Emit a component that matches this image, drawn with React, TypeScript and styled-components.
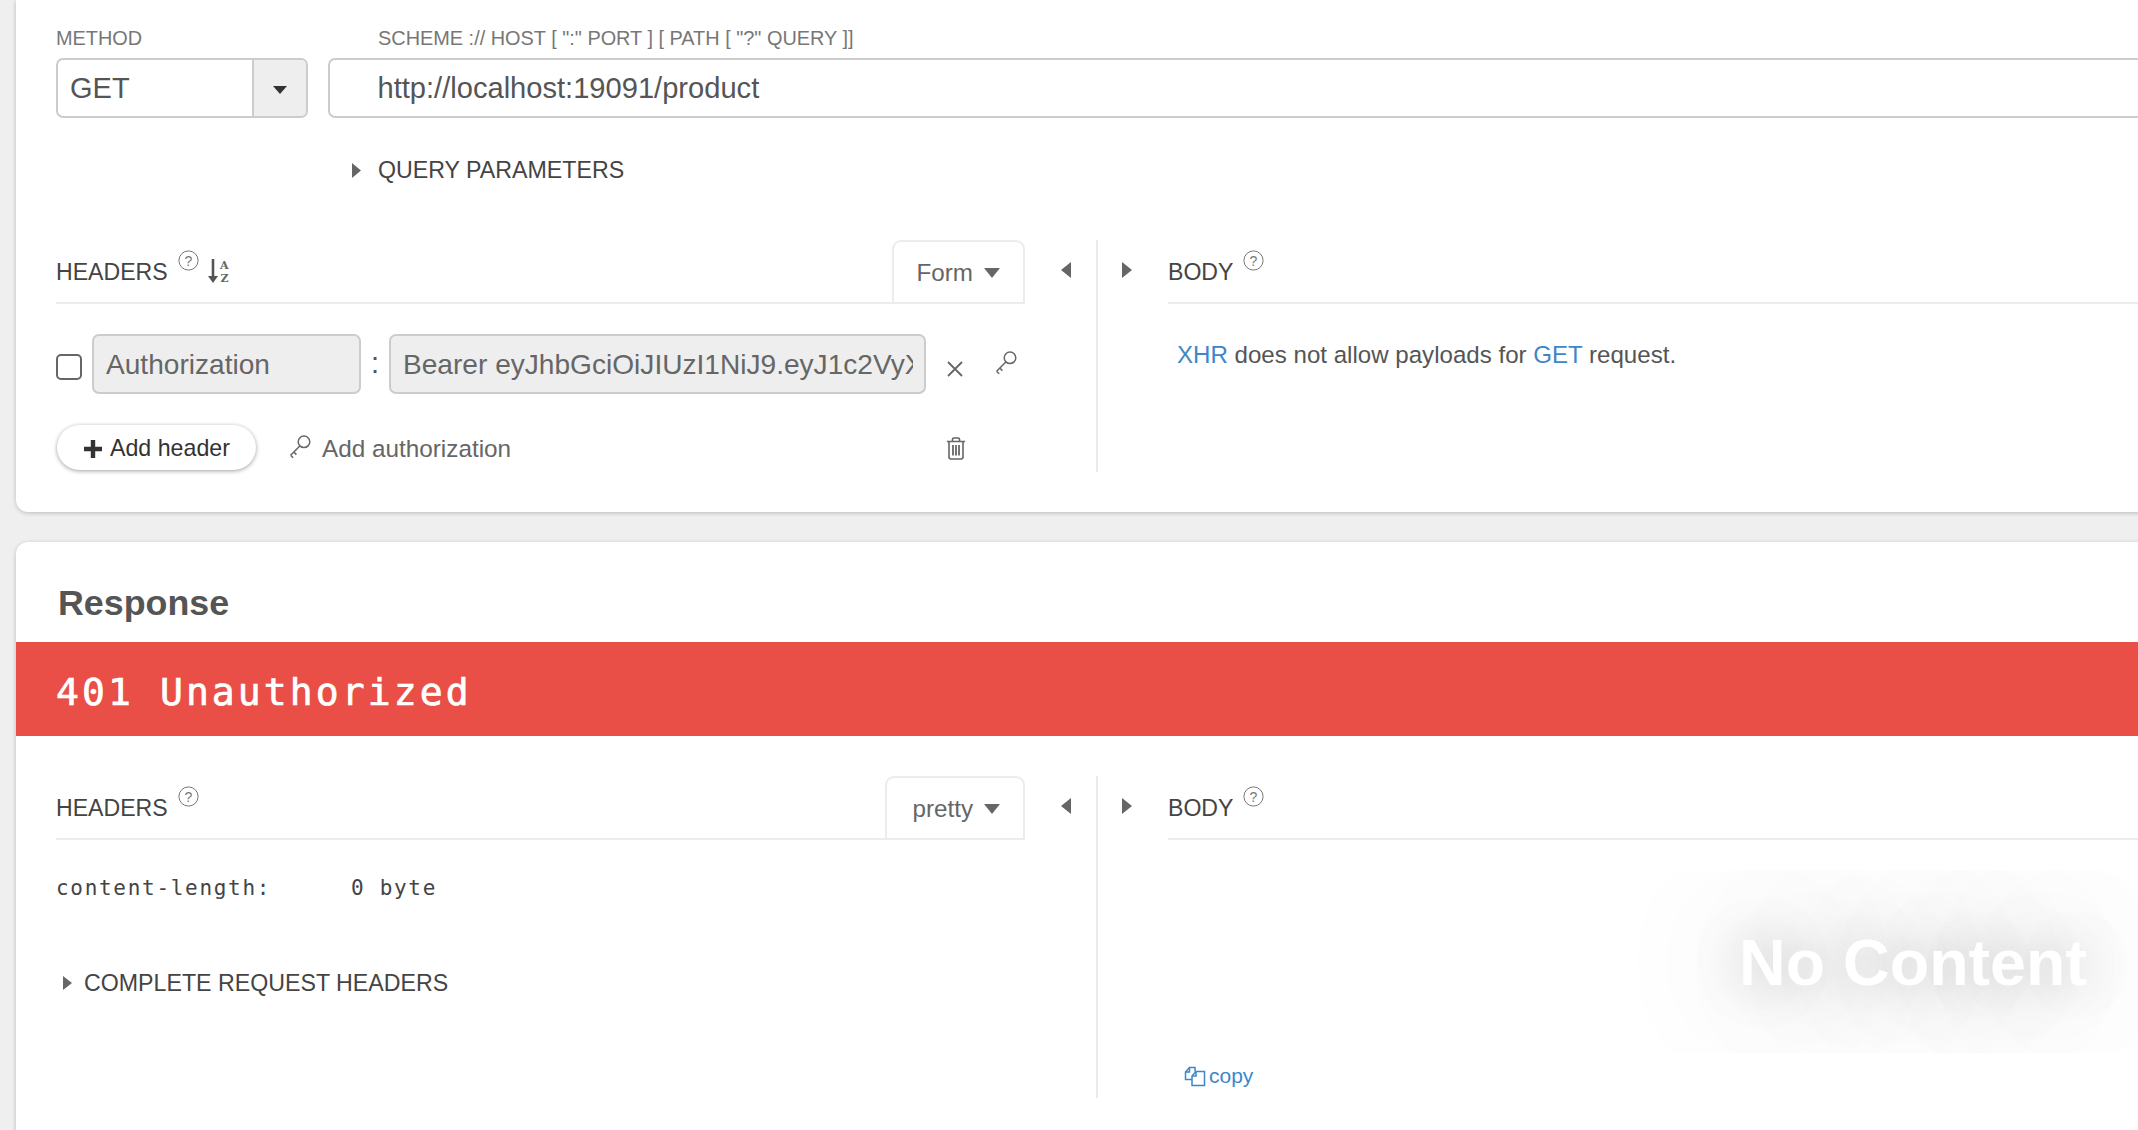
import React from "react";
import styled, { createGlobalStyle } from "styled-components";

const Global = createGlobalStyle`
  html, body { margin: 0; padding: 0; height: 100%; overflow: hidden; background: #efefef; }
  body { font-family: "Liberation Sans", Arial, sans-serif; color: #444; }
  #root { width: 2138px; height: 1130px; overflow: hidden; }
`;

const Page = styled.div`
  width: 2400px;
  padding-left: 16px;
  display: flex;
  flex-direction: column;
  gap: 30px;
`;

const Card = styled.section<{ $top?: boolean }>`
  background: #fff;
  box-shadow: 0 1px 4px rgba(0, 0, 0, 0.22);
  border-radius: ${(p) => (p.$top ? "0 0 12px 12px" : "12px 12px 0 0")};
  height: ${(p) => (p.$top ? "512px" : "640px")};
  display: flex;
  flex-direction: column;
`;

const UrlRow = styled.div`
  display: flex;
  padding: 27px 0 0 40px;
  gap: 20px;
`;

const Field = styled.div<{ $w?: number }>`
  width: ${(p) => (p.$w ? `${p.$w}px` : "auto")};
  flex: ${(p) => (p.$w ? "none" : "1")};
  display: flex;
  flex-direction: column;
  gap: 9px;
`;

const FieldLabel = styled.label<{ $indent?: number }>`
  font-size: 19.9px;
  line-height: 22px;
  color: #777;
  padding-left: ${(p) => p.$indent ?? 0}px;
`;

const Select = styled.div`
  height: 60px;
  box-sizing: border-box;
  border: 2.5px solid #ccc;
  border-radius: 7px;
  display: flex;
  overflow: hidden;
`;

const SelectValue = styled.div`
  flex: 1;
  font-size: 29px;
  line-height: 57px;
  padding-left: 12px;
  color: #555;
`;

const SelectArrow = styled.div`
  width: 54px;
  background: #eee;
  border-left: 2.5px solid #ccc;
  display: flex;
  align-items: center;
  justify-content: center;
  padding-top: 3px;
  box-sizing: border-box;
`;

const UrlInput = styled.div`
  height: 60px;
  box-sizing: border-box;
  border: 2.5px solid #ccc;
  border-radius: 7px;
  font-size: 29.1px;
  line-height: 57px;
  padding-left: 47.5px;
  color: #555;
`;

const Disclosure = styled.div<{ $x: number; $top: number; $gap: number }>`
  display: flex;
  align-items: center;
  padding-left: ${(p) => p.$x}px;
  margin-top: ${(p) => p.$top}px;
  gap: ${(p) => p.$gap}px;
  font-size: 23.2px;
  line-height: 28px;
  color: #444;
`;

const Panes = styled.div<{ $top: number; $h: number }>`
  display: flex;
  margin-top: ${(p) => p.$top}px;
  height: ${(p) => p.$h}px;
`;

const LeftPane = styled.div`
  width: 969px;
  margin-left: 40px;
  flex: none;
  display: flex;
  flex-direction: column;
`;

const Collapse = styled.div`
  width: 71px;
  flex: none;
  height: 63px;
  display: flex;
  align-items: center;
  padding: 0 0 4px 36px;
  box-sizing: border-box;
`;

const Gutter = styled.div`
  flex: none;
  width: 72px;
  display: flex;
  box-sizing: border-box;
`;

const GutterLine = styled.div`
  width: 2px;
  background: #e9e9e9;
  flex: none;
`;

const ExpandBtn = styled.div`
  flex: 1;
  height: 63px;
  display: flex;
  align-items: center;
  padding: 0 0 4px 24px;
  box-sizing: border-box;
`;

const RightPane = styled.div`
  flex: 1;
  display: flex;
  flex-direction: column;
  position: relative;
`;

const PaneHead = styled.div`
  height: 62px;
  border-bottom: 2px solid #ececec;
  box-sizing: content-box;
  display: flex;
  align-items: flex-start;
  position: relative;
`;

const PaneTitle = styled.h3`
  margin: 0;
  font-weight: 400;
  font-size: 23.1px;
  line-height: 28px;
  color: #444;
  padding-top: 18px;
`;

const Help = styled.svg`
  width: 21px;
  height: 21px;
  margin: 10px 0 0 10px;
  flex: none;
`;

const Sort = styled.svg`
  width: 24px;
  height: 27px;
  margin: 18px 0 0 8px;
  flex: none;
`;

const ModeTab = styled.div<{ $w: number }>`
  margin-left: auto;
  width: ${(p) => p.$w}px;
  height: 64px;
  box-sizing: border-box;
  border: 2px solid #ececec;
  border-radius: 9px 9px 0 0;
  display: flex;
  align-items: center;
  justify-content: flex-end;
  gap: 11px;
  padding: 2px 23px 0 0;
  font-size: 24.2px;
  color: #666;
  background: #fff;
`;

const HeaderRow = styled.div`
  display: flex;
  align-items: flex-start;
  margin-top: 30px;
  height: 60px;
`;

const Check = styled.span`
  width: 26px;
  height: 26px;
  box-sizing: border-box;
  border: 2.5px solid #666;
  border-radius: 5px;
  margin-top: 20px;
  flex: none;
`;

const ReadInput = styled.div<{ $w: number; $gap: number }>`
  width: ${(p) => p.$w}px;
  margin-left: ${(p) => p.$gap}px;
  height: 60px;
  box-sizing: border-box;
  background: #eee;
  border: 2.5px solid #ccc;
  border-radius: 7px;
  padding: 0 11px 0 12px;
  flex: none;
`;

const ReadText = styled.div`
  font-size: 28.1px;
  line-height: 57px;
  color: #666;
  white-space: nowrap;
  overflow: hidden;
`;

const Colon = styled.span`
  font-size: 29px;
  line-height: 58px;
  color: #555;
  margin-left: 10px;
  width: 9px;
  flex: none;
`;

const RowIcon = styled.svg<{ $gap: number; $top: number }>`
  flex: none;
  margin-left: ${(p) => p.$gap}px;
  margin-top: ${(p) => p.$top}px;
`;

const ActionRow = styled.div`
  display: flex;
  align-items: center;
  margin-top: 31px;
  height: 45px;
  padding-left: 1px;
`;

const AddButton = styled.div`
  width: 199px;
  height: 45px;
  box-sizing: border-box;
  border-radius: 23px;
  background: #fff;
  box-shadow: 0 1px 4px rgba(0, 0, 0, 0.38);
  display: flex;
  align-items: center;
  padding: 2px 0 0 27px;
  gap: 8px;
  font-size: 23.2px;
  color: #333;
  flex: none;
`;

const AddAuth = styled.div`
  display: flex;
  align-items: center;
  margin-left: 33px;
  padding-top: 2px;
  gap: 11px;
  font-size: 24.3px;
  color: #666;
  flex: none;
  width: 657px;
`;

const AuthKey = styled.svg`
  margin-top: -4px;
  flex: none;
`;

const Trash = styled.svg`
  margin-top: 2px;
  flex: none;
`;

const BodyNote = styled.p`
  margin: 37px 0 0 9px;
  font-size: 24.1px;
  line-height: 28px;
  color: #555;
`;

const Link = styled.span`
  color: #3d87c9;
`;

const Title = styled.h2`
  margin: 0;
  padding: 41px 0 0 42px;
  font-size: 35.8px;
  line-height: 40px;
  height: 59px;
  font-weight: 700;
  color: #555;
`;

const StatusBar = styled.div`
  height: 94px;
  background: #e94f47;
  color: #fff;
  font-family: "DejaVu Sans Mono", monospace;
  font-size: 38px;
  -webkit-text-stroke: 0.7px #fff;
  letter-spacing: 3.1px;
  line-height: 100px;
  padding-left: 40px;
  white-space: pre;
`;

const MonoLine = styled.div`
  font-family: "DejaVu Sans Mono", monospace;
  font-size: 21px;
  letter-spacing: 1.7px;
  color: #444;
  white-space: pre;
  margin-top: 36px;
  line-height: 24px;
  display: flex;
`;

const MonoKey = styled.span`
  width: 295px;
  flex: none;
`;

const ShadowClip = styled.div`
  position: absolute;
  left: 0;
  right: 0;
  top: 94px;
  height: 183px;
  overflow: hidden;
  box-sizing: border-box;
  padding: 56px 0 0 571px;
`;

const NoContent = styled.div`
  font-size: 64.6px;
  line-height: 74px;
  font-weight: 700;
  color: #fff;
  white-space: nowrap;
  text-shadow: 0 0 50px rgba(0, 0, 0, 0.22), 0 0 125px rgba(0, 0, 0, 0.42);
`;

const CopyLink = styled.div`
  position: absolute;
  left: 16px;
  top: 287px;
  display: flex;
  align-items: center;
  gap: 3px;
  font-size: 21px;
  line-height: 26px;
  color: #3d87c9;
`;

const HelpIcon = () => (
  <Help viewBox="0 0 21 21">
    <circle cx="10.5" cy="10.5" r="9.6" fill="none" stroke="#777" strokeWidth="1" />
    <text x="10.5" y="15.5" textAnchor="middle" fontSize="14" fontFamily="Liberation Sans" fill="#777">?</text>
  </Help>
);

const Tri = ({ dir, color = "#666", w, h }: { dir: "l" | "r" | "d"; color?: string; w?: number; h?: number }) => {
  if (dir === "d")
    return (
      <svg width={w ?? 16} height={h ?? 10} viewBox="0 0 16 10" preserveAspectRatio="none">
        <path d="M0 0H16L8 10Z" fill={color} />
      </svg>
    );
  return (
    <svg width={w ?? 10} height={h ?? 16} viewBox="0 0 10 16" preserveAspectRatio="none">
      <path d={dir === "l" ? "M10 0V16L0 8Z" : "M0 0V16L10 8Z"} fill={color} />
    </svg>
  );
};

const KeyPath = () => (
  <g fill="none" stroke="#666" strokeWidth="1.5">
    <circle cx="15" cy="6.8" r="5.8" />
    <path d="M10.8 11L1.6 20.2M1.6 20.2L4.2 22.8M4.8 17L7.4 19.6" />
  </g>
);

const App = () => (
  <>
    <Global />
    <Page>
      <Card $top>
        <UrlRow>
          <Field $w={252}>
            <FieldLabel>METHOD</FieldLabel>
            <Select>
              <SelectValue>GET</SelectValue>
              <SelectArrow>
                <Tri dir="d" color="#333" w={14} h={8} />
              </SelectArrow>
            </Select>
          </Field>
          <Field>
            <FieldLabel $indent={50}>SCHEME :// HOST [ ":" PORT ] [ PATH [ "?" QUERY ]]</FieldLabel>
            <UrlInput>http://localhost:19091/product</UrlInput>
          </Field>
        </UrlRow>
        <Disclosure $x={336} $top={38} $gap={17}>
          <Tri dir="r" w={9} h={15} />
          QUERY PARAMETERS
        </Disclosure>
        <Panes $top={56} $h={232}>
          <LeftPane>
            <PaneHead>
              <PaneTitle>HEADERS</PaneTitle>
              <HelpIcon />
              <Sort viewBox="0 0 24 27">
                <path d="M6 1V20" stroke="#555" strokeWidth="2.6" />
                <path d="M1 18H11L6 25Z" fill="#555" />
                <text x="13" y="11" fontSize="11" fontWeight="700" fontFamily="DejaVu Serif" fill="#666">A</text>
                <text x="13.5" y="24" fontSize="11" fontWeight="700" fontFamily="DejaVu Serif" fill="#666">Z</text>
              </Sort>
              <ModeTab $w={133}>
                Form
                <Tri dir="d" />
              </ModeTab>
            </PaneHead>
            <HeaderRow>
              <Check />
              <ReadInput $w={269} $gap={10}>
                <ReadText>Authorization</ReadText>
              </ReadInput>
              <Colon>:</Colon>
              <ReadInput $w={537} $gap={9}>
                <ReadText>Bearer eyJhbGciOiJIUzI1NiJ9.eyJ1c2VyX</ReadText>
              </ReadInput>
              <RowIcon $gap={21} $top={27} width="16" height="16" viewBox="0 0 16 16">
                <path d="M1 1L15 15M15 1L1 15" stroke="#666" strokeWidth="1.8" />
              </RowIcon>
              <RowIcon $gap={32} $top={17} width="22" height="24" viewBox="0 0 22 24">
                <KeyPath />
              </RowIcon>
            </HeaderRow>
            <ActionRow>
              <AddButton>
                <svg width="18" height="18" viewBox="0 0 18 18">
                  <path d="M9 0V18M0 9H18" stroke="#333" strokeWidth="4.4" />
                </svg>
                Add header
              </AddButton>
              <AddAuth>
                <AuthKey width="22" height="24" viewBox="0 0 22 24">
                  <KeyPath />
                </AuthKey>
                Add authorization
              </AddAuth>
              <Trash width="20" height="23" viewBox="0 0 20 23" fill="none" stroke="#666" strokeWidth="1.6">
                <path d="M1 4.5H19M6.5 4.5V2.2C6.5 1.4 7 1 7.8 1H12.2C13 1 13.5 1.4 13.5 2.2V4.5" />
                <path d="M3 4.5V20C3 21.2 3.8 22 5 22H15C16.2 22 17 21.2 17 20V4.5" />
                <path d="M7 8V18.5M10 8V18.5M13 8V18.5" strokeWidth="1.8" />
              </Trash>
            </ActionRow>
          </LeftPane>
          <Collapse>
            <Tri dir="l" />
          </Collapse>
          <Gutter>
            <GutterLine />
            <ExpandBtn>
              <Tri dir="r" />
            </ExpandBtn>
          </Gutter>
          <RightPane>
            <PaneHead>
              <PaneTitle>BODY</PaneTitle>
              <HelpIcon />
            </PaneHead>
            <BodyNote>
              <Link>XHR</Link> does not allow payloads for <Link>GET</Link> request.
            </BodyNote>
          </RightPane>
        </Panes>
      </Card>
      <Card>
        <Title>Response</Title>
        <StatusBar>401 Unauthorized</StatusBar>
        <Panes $top={40} $h={322}>
          <LeftPane>
            <PaneHead>
              <PaneTitle>HEADERS</PaneTitle>
              <HelpIcon />
              <ModeTab $w={140}>
                pretty
                <Tri dir="d" />
              </ModeTab>
            </PaneHead>
            <MonoLine>
              <MonoKey>content-length:</MonoKey>
              <span>0 byte</span>
            </MonoLine>
            <Disclosure $x={7} $top={69} $gap={12}>
              <Tri dir="r" w={9} h={14} />
              COMPLETE REQUEST HEADERS
            </Disclosure>
          </LeftPane>
          <Collapse>
            <Tri dir="l" />
          </Collapse>
          <Gutter>
            <GutterLine />
            <ExpandBtn>
              <Tri dir="r" />
            </ExpandBtn>
          </Gutter>
          <RightPane>
            <PaneHead>
              <PaneTitle>BODY</PaneTitle>
              <HelpIcon />
            </PaneHead>
            <ShadowClip>
              <NoContent>No Content</NoContent>
            </ShadowClip>
            <CopyLink>
              <svg width="22" height="21" viewBox="0 0 22 20" fill="none" stroke="#3d87c9" strokeWidth="1.5">
                <path d="M8 13H1.5V5.5L5.5 1H11V5" />
                <path d="M5.5 1V5.5H1.5" />
                <path d="M8 9.5L12 5H20.5V19H8Z" fill="#fff" />
                <path d="M12 5V9.5H8" />
              </svg>
              copy
            </CopyLink>
          </RightPane>
        </Panes>
      </Card>
    </Page>
  </>
);

export default App;
